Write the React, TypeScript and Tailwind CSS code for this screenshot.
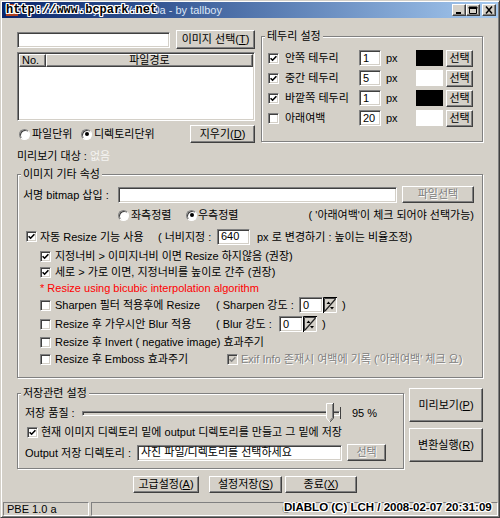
import type { ReactNode } from 'react'

const raised =
  'border border-t-white border-l-white border-r-[#404040] border-b-[#404040] shadow-[inset_-1px_-1px_0_#808080]'
const sunken =
  'border border-t-[#808080] border-l-[#808080] border-r-white border-b-white shadow-[inset_1px_1px_0_#404040,inset_-1px_-1px_0_#d4d0c8]'
const thinIn = 'border border-t-[#808080] border-l-[#808080] border-r-white border-b-white'
const grayText = 'text-[#808080] [text-shadow:1px_1px_0_#fff]'
const outline =
  '[text-shadow:1px_0_0_#fff,-1px_0_0_#fff,0_1px_0_#fff,0_-1px_0_#fff,1px_1px_0_#fff,-1px_-1px_0_#fff,1px_-1px_0_#fff,-1px_1px_0_#fff]'

function Button({
  children,
  className = '',
  disabled = false,
}: {
  children: ReactNode
  className?: string
  disabled?: boolean
}) {
  return (
    <div
      className={`flex shrink-0 items-center justify-center bg-[#d4d0c8] leading-none whitespace-nowrap ${raised} ${
        disabled ? grayText : ''
      } ${className}`}
    >
      {children}
    </div>
  )
}

function Field({ children, className = '' }: { children?: ReactNode; className?: string }) {
  return (
    <div className={`flex shrink-0 items-center bg-white pl-[3px] leading-none whitespace-nowrap ${sunken} ${className}`}>
      {children}
    </div>
  )
}

function Check({ on = false, disabled = false }: { on?: boolean; disabled?: boolean }) {
  return (
    <span
      className={`flex h-[11px] w-[11px] shrink-0 items-center justify-center ${sunken} ${
        disabled ? 'bg-[#d4d0c8]' : 'bg-white'
      }`}
    >
      {on && (
        <svg width="7" height="7" viewBox="0 0 7 7">
          <path
            d="M0.6 3.2L2.6 5.2L6.4 1.2"
            fill="none"
            stroke={disabled ? '#808080' : '#000'}
            strokeWidth="1.6"
          />
        </svg>
      )}
    </span>
  )
}

function Radio({ on = false }: { on?: boolean }) {
  return (
    <span className="flex h-[11px] w-[11px] shrink-0 items-center justify-center rounded-full border border-t-[#808080] border-l-[#808080] border-r-white border-b-white bg-white shadow-[inset_1px_1px_0_#404040]">
      {on && <span className="h-[4px] w-[4px] rounded-full bg-black" />}
    </span>
  )
}

function Group({ title, className = '', children }: { title: string; className?: string; children: ReactNode }) {
  return (
    <fieldset className={`shrink-0 border border-[#808080] shadow-[1px_1px_0_#fff,inset_1px_1px_0_#fff] ${className}`}>
      <legend className="ml-[3px] bg-[#d4d0c8] px-[2px] leading-[12px]">{title}</legend>
      {children}
    </fieldset>
  )
}

function Spin() {
  return (
    <div className="flex h-[16px] shrink-0">
      <div className={`flex w-[24px] items-center bg-white pl-[3px] leading-none ${sunken}`}>0</div>
      <svg width="14" height="16" viewBox="0 0 14 16">
        <rect x="0" y="0" width="14" height="16" fill="#d4d0c8" />
        <path d="M0.5 16V0.5H14" fill="none" stroke="#000" />
        <path d="M1.5 15V1.5H13" fill="none" stroke="#404040" />
        <path d="M13.5 1V15.5H1" fill="none" stroke="#fff" />
        <path d="M2 14L12.5 2" stroke="#202020" strokeWidth="1.2" />
        <path d="M3.5 7L5.5 4.5L7.5 7Z" fill="#000" />
        <path d="M7 10L9 12.5L11 10Z" fill="#000" />
      </svg>
    </div>
  )
}

function Slider() {
  return (
    <div className="relative h-[20px] w-[262px] shrink-0">
      <div className={`absolute left-0 top-[8px] h-[5px] w-[258px] bg-[#d4d0c8] ${thinIn} shadow-[inset_1px_1px_0_#404040]`} />
      <div className="absolute left-[258px] top-[4px] h-[12px] w-px bg-[#404040]" />
      <svg className="absolute left-[244px] top-0" width="8" height="20" viewBox="0 0 8 20">
        <path d="M0 0H8V15L4 19.5L0 15Z" fill="#d4d0c8" />
        <path d="M0.5 15V0.5H7" fill="none" stroke="#fff" />
        <path d="M7.5 0V15L4 19" fill="none" stroke="#404040" />
        <path d="M6.5 1V14.6L4 17.6" fill="none" stroke="#808080" />
        <path d="M0.5 15L4 19" fill="none" stroke="#fff" />
      </svg>
    </div>
  )
}

function TitleButton({ kind }: { kind: 'min' | 'max' | 'close' }) {
  return (
    <div className={`flex h-[12px] w-[14px] items-center justify-center bg-[#d4d0c8] ${raised}`}>
      <svg width="10" height="8" viewBox="0 0 10 8">
        {kind === 'min' && <rect x="2" y="6" width="5" height="2" fill="#000" />}
        {kind === 'max' && <path d="M1.5 1.5H8.5V7.5H1.5Z M1 1H9V2.5H1Z" fill="none" stroke="#000" />}
        {kind === 'close' && <path d="M2 0.5L8 7.5M8 0.5L2 7.5" stroke="#000" strokeWidth="1.5" />}
      </svg>
    </div>
  )
}

const borders = [
  { label: '안쪽 테두리', value: '1', swatch: 'bg-black', on: true },
  { label: '중간 테두리', value: '5', swatch: 'bg-white', on: true },
  { label: '바깥쪽 테두리', value: '1', swatch: 'bg-black', on: true },
  { label: '아래여백', value: '20', swatch: 'bg-white', on: false },
]

export default function App() {
  return (
    <div className="relative flex h-[518px] w-[500px] flex-col overflow-hidden border border-t-[#d4d0c8] border-l-[#d4d0c8] border-r-[#404040] border-b-[#404040] bg-[#d4d0c8] p-px font-['Liberation_Sans','Noto_Sans_CJK_KR',sans-serif] text-[11px] leading-[14px] text-black shadow-[inset_1px_1px_0_#fff,inset_-1px_-1px_0_#808080]">
      {/* Title bar */}
      <div className="flex h-[16px] shrink-0 items-center bg-linear-to-r from-[#0a246a] to-[#a6caf0] px-[2px]">
        <svg width="14" height="14" viewBox="0 0 14 14" className="ml-px shrink-0">
          <rect x="1" y="1" width="12" height="12" fill="#b04020" />
          <rect x="3" y="3" width="8" height="8" fill="#e8c090" />
          <rect x="5" y="5" width="4" height="4" fill="#6a2010" />
        </svg>
        <span className="ml-[3px] text-[11px] leading-none whitespace-nowrap text-[#dbe6f6]">
          PhotoBorder bypass Ver 1.0a - by tallboy
        </span>
        <div className="ml-auto flex items-center">
          <TitleButton kind="min" />
          <TitleButton kind="max" />
          <div className="ml-[2px]">
            <TitleButton kind="close" />
          </div>
        </div>
      </div>

      {/* Files + border settings */}
      <div className="mt-[12px] flex items-start px-[15px]">
        <div className="flex w-[238px] shrink-0 flex-col">
          <div className="flex h-[19px] items-center">
            <Field className="h-[16px] w-[153px]" />
            <Button className="ml-[6px] h-[19px] w-[79px]">
              이미지 선택(<u>T</u>)
            </Button>
          </div>
          <div className={`mt-[3px] h-[69px] bg-white p-px ${sunken}`}>
            <div className="flex h-[13px]">
              <div className={`w-[27px] bg-[#d4d0c8] pl-[2px] leading-[11px] ${raised}`}>No.</div>
              <div className={`flex-1 bg-[#d4d0c8] text-center leading-[11px] ${raised}`}>파일경로</div>
            </div>
          </div>
          <div className="mt-[4px] flex h-[18px] items-center pl-[2px]">
            <Radio />
            <span className="ml-[2px] w-[49px] whitespace-nowrap">파일단위</span>
            <Radio on />
            <span className="ml-[2px] whitespace-nowrap">디렉토리단위</span>
            <Button className="ml-auto h-[18px] w-[65px]">
              지우기(<u>D</u>)
            </Button>
          </div>
        </div>

        <Group title="테두리 설정" className="ml-[6px] h-[112px] w-[222px]">
          <div className="pl-[6px] pt-[6px]">
            {borders.map((b) => (
              <div key={b.label} className="flex h-[20px] items-center">
                <Check on={b.on} />
                <span className="ml-[6px] w-[74px] whitespace-nowrap">{b.label}</span>
                <Field className="h-[16px] w-[22px]">{b.value}</Field>
                <span className="ml-[5px] w-[30px]">px</span>
                <div className={`h-[16px] w-[27px] ${b.swatch}`} />
                <Button className="ml-[3px] h-[17px] w-[27px]">선택</Button>
              </div>
            ))}
          </div>
        </Group>
      </div>

      <div className="mt-[6px] flex h-[14px] items-center px-[15px] whitespace-nowrap">
        {'미리보기 대상 : '}
        <span className="ml-[3px] text-[#f4f4f2]">없음</span>
      </div>

      {/* Image options */}
      <div className="mt-[5px] px-[15px]">
        <Group title="이미지 기타 속성" className="h-[210px] w-[466px]">
          <div className="flex flex-col whitespace-nowrap">
            <div className="mt-[6px] flex h-[17px] items-center pl-[5px]">
              <span className="w-[95px]">서명 bitmap 삽입 :</span>
              <Field className="h-[16px] w-[279px]" />
              <Button disabled className="ml-[5px] h-[17px] w-[72px]">
                파일선택
              </Button>
            </div>
            <div className="mt-[5px] flex h-[14px] items-center pl-[100px] pr-[8px]">
              <Radio />
              <span className="ml-[2px] w-[55px]">좌측정렬</span>
              <Radio on />
              <span className="ml-px">우측정렬</span>
              <span className="ml-auto">( '아래여백'이 체크 되어야 선택가능)</span>
            </div>
            <div className="mt-[6px] flex h-[17px] items-center pl-[8px]">
              <Check on />
              <span className="ml-[3px] w-[118px]">자동 Resize 기능 사용</span>
              <span className="w-[57px]">( 너비지정 :</span>
              <Field className="ml-[2px] h-[16px] w-[33px]">640</Field>
              <span className="ml-[7px]">px 로 변경하기 : 높이는 비율조정)</span>
            </div>
            <div className="mt-[3px] flex h-[16px] items-center pl-[22px]">
              <Check on />
              <span className="ml-[4px]">지정너비 &gt; 이미지너비 이면 Resize 하지않음 (권장)</span>
            </div>
            <div className="flex h-[16px] items-center pl-[22px]">
              <Check on />
              <span className="ml-[4px]">세로 &gt; 가로 이면, 지정너비를 높이로 간주 (권장)</span>
            </div>
            <div className="flex h-[16px] items-center pl-[22px] text-[#f00]">
              * Resize using bicubic interpolation algorithm
            </div>
            <div className="mt-px flex h-[16px] items-center pl-[22px]">
              <Check />
              <span className="ml-[4px] w-[161px]">Sharpen 필터 적용후에 Resize</span>
              <span className="w-[81px]">( Sharpen 강도 :</span>
              <div className="ml-[2px]">
                <Spin />
              </div>
              <span className="ml-[5px]">)</span>
            </div>
            <div className="mt-[3px] flex h-[16px] items-center pl-[22px]">
              <Check />
              <span className="ml-[4px] w-[161px]">Resize 후 가우시안 Blur 적용</span>
              <span className="w-[61px]">( Blur 강도 :</span>
              <div className="ml-[2px]">
                <Spin />
              </div>
              <span className="ml-[5px]">)</span>
            </div>
            <div className="mt-[2px] flex h-[16px] items-center pl-[22px]">
              <Check />
              <span className="ml-[4px]">Resize 후 Invert ( negative image) 효과주기</span>
            </div>
            <div className="mt-px flex h-[16px] items-center pl-[22px]">
              <Check />
              <span className="ml-[4px] w-[172px]">Resize 후 Emboss 효과주기</span>
              <Check on disabled />
              <span className={`ml-[3px] ${grayText}`}>Exif Info 존재시 여백에 기록 ('아래여백' 체크 요)</span>
            </div>
          </div>
        </Group>
      </div>

      {/* Save settings + actions */}
      <div className="mt-[9px] flex items-start px-[15px]">
        <Group title="저장관련 설정" className="h-[82px] w-[387px]">
          <div className="flex flex-col whitespace-nowrap">
            <div className="mt-[4px] flex h-[20px] items-center pl-[7px]">
              <span className="w-[57px]">저장 품질 :</span>
              <Slider />
              <span className="ml-[8px]">95 %</span>
            </div>
            <div className="mt-px flex h-[16px] items-center pl-[9px]">
              <Check on />
              <span className="ml-[3px]">현재 이미지 디렉토리 밑에 output 디렉토리를 만들고 그 밑에 저장</span>
            </div>
            <div className="mt-[4px] flex h-[17px] items-center pl-[7px]">
              <span className="w-[112px]">Output 저장 디렉토리 :</span>
              <Field className="h-[16px] w-[205px]">사진 파일/디렉토리를 선택하세요</Field>
              <Button disabled className="ml-[5px] h-[17px] w-[39px]">
                선택
              </Button>
            </div>
          </div>
        </Group>
        <div className="ml-[5px] flex w-[74px] flex-col">
          <Button className="mt-px h-[34px] w-[74px]">
            미리보기(<u>P</u>)
          </Button>
          <Button className="mt-[6px] h-[34px] w-[74px]">
            변환실행(<u>R</u>)
          </Button>
        </div>
      </div>

      <div className="mt-[7px] flex h-[17px] items-center pl-[131px]">
        <Button className="h-[17px] w-[66px]">
          고급설정(<u>A</u>)
        </Button>
        <Button className="ml-[10px] h-[17px] w-[73px]">
          설정저장(<u>S</u>)
        </Button>
        <Button className="ml-[3px] h-[17px] w-[72px]">
          종료(<u>X</u>)
        </Button>
      </div>

      {/* Status bar */}
      <div className="mt-auto flex h-[14px] shrink-0 gap-[2px] pl-px">
        <div className={`w-[86px] pl-[3px] leading-[12px] whitespace-nowrap ${thinIn}`}>PBE 1.0 a</div>
        <div className={`flex-1 pl-[190px] leading-[12px] text-[#808080] ${thinIn}`}>C</div>
      </div>

      {/* Watermarks */}
      <div
        className={`absolute left-[5px] top-[2px] font-['Liberation_Mono',monospace] text-[12px] leading-[15px] font-bold whitespace-nowrap text-black ${outline}`}
      >
        http://www.bcpark.net
      </div>
      <div
        className={`absolute left-[283px] top-[500px] text-[11.5px] leading-[13px] font-bold whitespace-nowrap text-black ${outline}`}
      >
        DIABLO (C) LCH / 2008-02-07 20:31:09
      </div>
    </div>
  )
}
